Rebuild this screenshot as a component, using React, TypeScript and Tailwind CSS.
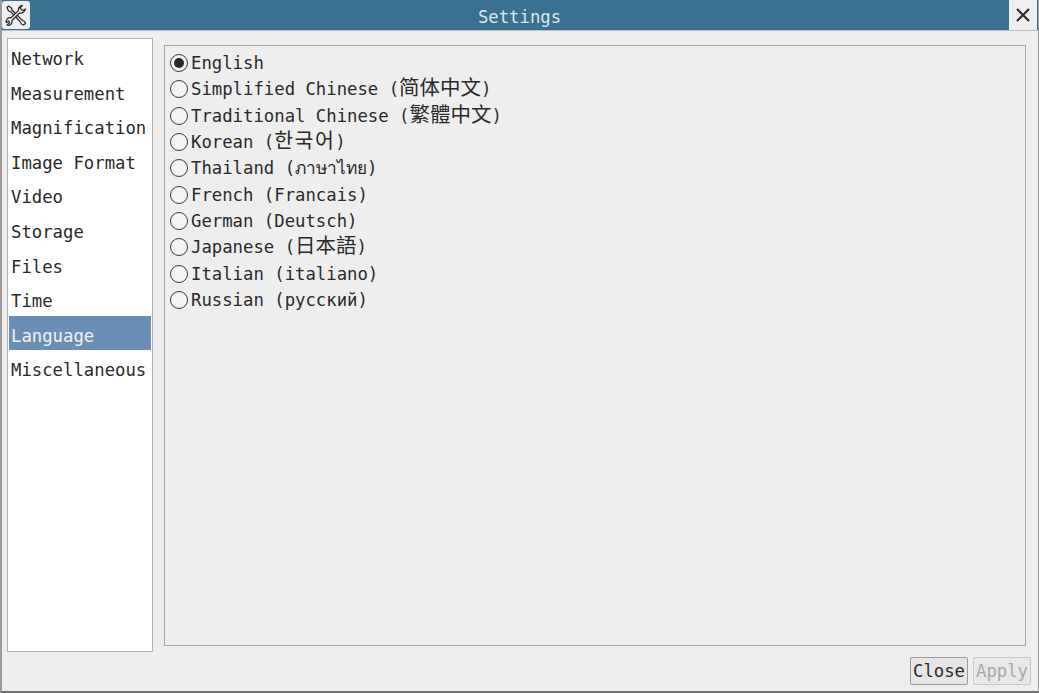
import React from 'react';

const menuItems = ['Network', 'Measurement', 'Magnification', 'Image Format', 'Video', 'Storage', 'Files', 'Time', 'Language', 'Miscellaneous'];

const languages = [
  { label: 'English' },
  { label: 'Simplified Chinese (', native: '简体中文' },
  { label: 'Traditional Chinese (', native: '繁體中文' },
  { label: 'Korean (', native: '한국어', wide: true },
  { label: 'Thailand (ภาษาไทย)' },
  { label: 'French (Francais)' },
  { label: 'German (Deutsch)' },
  { label: 'Japanese (', native: '日本語' },
  { label: 'Italian (italiano)' },
  { label: 'Russian (русский)' },
];

const font = "font-['DejaVu_Sans_Mono','Noto_Sans_CJK_SC',monospace]";

const ToolsIcon = () => (
  <svg width="24" height="24" viewBox="0 0 24 24" fill="none" stroke="#2b2b2b" strokeWidth="1.2" strokeLinejoin="round">
    <path d="M3 4.5 L4.5 3 L7.5 5 L8 7 L18 17 L20.5 18.5 L21.5 20.5 L19.5 22 L17.5 21 L16 18.5 L6.5 8.5 L4.5 8 Z" />
    <path d="M21.5 6 A5 5 0 0 1 15.5 10 L8 17.5 A3.8 3.8 0 0 1 3 22 L5.6 19.6 L4.8 18 L2.4 19.6 A3.8 3.8 0 0 1 7 14.8 L14.4 7.6 A5 5 0 0 1 18.5 2.4 L16 5 L18.6 7.6 Z" fill="#f0f0f0" />
  </svg>
);

const Radio = ({ checked }: { checked: boolean }) => (
  <span className="w-[18px] h-[18px] shrink-0 rounded-full border-[1.5px] border-[#3a3a3a] bg-[#f4f4f4] flex items-center justify-center">
    {checked && <span className="w-[10px] h-[10px] rounded-full bg-[#2a2a2a]" />}
  </span>
);

export default function App() {
  return (
    <div className={`w-[1039px] h-[693px] flex flex-col overflow-hidden bg-[#eeeeee] border-l-2 border-r border-b-2 border-l-[#9a9a9a] border-r-[#9a9a9a] border-b-[#6e6e6e] text-[17.3px] text-[#2a2a2a] ${font}`}>
      <div className="h-[31px] -ml-[2px] -mr-px shrink-0 flex items-start justify-between bg-[#3b7091] border-b border-[#b5c2ca]">
        <button className="w-[28px] h-[28px] mt-px ml-[2px] flex items-center justify-center rounded-[3px] bg-[#efefef]">
          <ToolsIcon />
        </button>
        <span className="text-[#dfe6ea] leading-[35px]">Settings</span>
        <button className="w-[28px] h-[30px] mr-[2px] flex items-center justify-center bg-[#efefef]">
          <svg width="16" height="16" viewBox="0 0 16 16" stroke="#2b2b2b" strokeWidth="2.2">
            <path d="M2 2 L14 14 M14 2 L2 14" />
          </svg>
        </button>
      </div>

      <div className="flex-1 min-h-0 flex gap-[11px] pl-[5px] pr-[7px] pt-[7px]">
        <div className="w-[146px] h-[614px] shrink-0 bg-white border border-[#b4b4b4] px-px">
          {menuItems.map((item) => (
            <div
              key={item}
              className={`h-[34.6px] leading-[40px] px-[2px] whitespace-pre ${item === 'Language' ? 'bg-[#6a8fb5] text-[#eef2f6]' : ''}`}
            >
              {item}
            </div>
          ))}
        </div>

        <div className="flex-1 flex flex-col">
          <div className="h-[601px] mt-[7px] mr-[-1px] w-[862px] border border-[#a8a8a8] pt-[4px] pl-[5px]">
            {languages.map((lang, index) => (
              <div key={lang.label} className="h-[26.3px] flex items-center gap-[3px] whitespace-pre">
                <Radio checked={index === 0} />
                <span className="leading-[24px]">
                  {lang.label}
                  {lang.native && (
                    <>
                      <span className={`text-[20.5px] leading-none ${lang.wide ? 'tracking-[1.5px]' : ''}`}>{lang.native}</span>)
                    </>
                  )}
                </span>
              </div>
            ))}
          </div>
          <div className="flex justify-end gap-[5px] mt-[11px]">
            <button className="w-[58px] h-[28px] pt-[2px] rounded-[2px] border border-[#9c9c9c] bg-[#e6e6e6] leading-none">Close</button>
            <button className="w-[58px] h-[28px] pt-[2px] rounded-[2px] border border-[#c8c8c8] bg-[#e8e8e8] text-[#a8a8a8] leading-none">Apply</button>
          </div>
        </div>
      </div>
    </div>
  );
}
